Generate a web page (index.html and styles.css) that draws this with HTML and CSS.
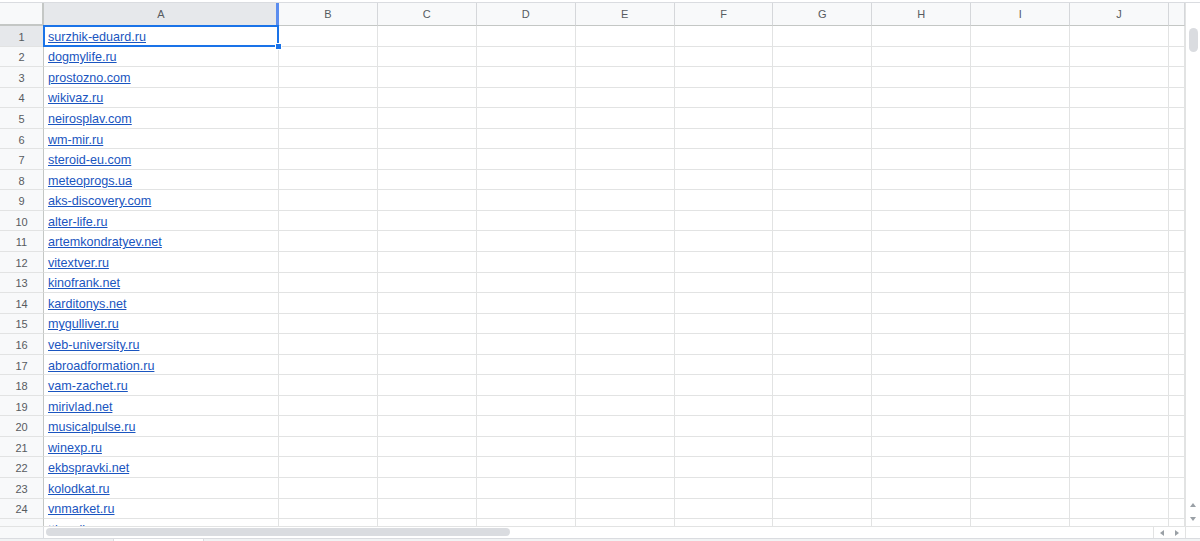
FILE: index.html
```html
<!DOCTYPE html>
<html lang="ru">
<head>
    <meta charset="UTF-8">
    <title>Таблица</title>
    <link rel="stylesheet" href="styles.css">
</head>
<body>
    <div class="top-edge"></div>

    <div class="main">
        <div class="grid">
            <div class="row head">
                <div class="corner"></div>
                <div class="col-a">A</div>
                <div>B</div><div>C</div><div>D</div><div>E</div><div>F</div>
                <div>G</div><div>H</div><div>I</div><div>J</div><div></div>
            </div>

            <div class="row"><div class="rn on">1</div><div class="cell sel"><a href="#">surzhik-eduard.ru</a><span class="handle"></span></div><div></div><div></div><div></div><div></div><div></div><div></div><div></div><div></div><div></div><div></div></div>
            <div class="row"><div class="rn">2</div><div class="cell"><a href="#">dogmylife.ru</a></div><div></div><div></div><div></div><div></div><div></div><div></div><div></div><div></div><div></div><div></div></div>
            <div class="row"><div class="rn">3</div><div class="cell"><a href="#">prostozno.com</a></div><div></div><div></div><div></div><div></div><div></div><div></div><div></div><div></div><div></div><div></div></div>
            <div class="row"><div class="rn">4</div><div class="cell"><a href="#">wikivaz.ru</a></div><div></div><div></div><div></div><div></div><div></div><div></div><div></div><div></div><div></div><div></div></div>
            <div class="row"><div class="rn">5</div><div class="cell"><a href="#">neirosplav.com</a></div><div></div><div></div><div></div><div></div><div></div><div></div><div></div><div></div><div></div><div></div></div>
            <div class="row"><div class="rn">6</div><div class="cell"><a href="#">wm-mir.ru</a></div><div></div><div></div><div></div><div></div><div></div><div></div><div></div><div></div><div></div><div></div></div>
            <div class="row"><div class="rn">7</div><div class="cell"><a href="#">steroid-eu.com</a></div><div></div><div></div><div></div><div></div><div></div><div></div><div></div><div></div><div></div><div></div></div>
            <div class="row"><div class="rn">8</div><div class="cell"><a href="#">meteoprogs.ua</a></div><div></div><div></div><div></div><div></div><div></div><div></div><div></div><div></div><div></div><div></div></div>
            <div class="row"><div class="rn">9</div><div class="cell"><a href="#">aks-discovery.com</a></div><div></div><div></div><div></div><div></div><div></div><div></div><div></div><div></div><div></div><div></div></div>
            <div class="row"><div class="rn">10</div><div class="cell"><a href="#">alter-life.ru</a></div><div></div><div></div><div></div><div></div><div></div><div></div><div></div><div></div><div></div><div></div></div>
            <div class="row"><div class="rn">11</div><div class="cell"><a href="#">artemkondratyev.net</a></div><div></div><div></div><div></div><div></div><div></div><div></div><div></div><div></div><div></div><div></div></div>
            <div class="row"><div class="rn">12</div><div class="cell"><a href="#">vitextver.ru</a></div><div></div><div></div><div></div><div></div><div></div><div></div><div></div><div></div><div></div><div></div></div>
            <div class="row"><div class="rn">13</div><div class="cell"><a href="#">kinofrank.net</a></div><div></div><div></div><div></div><div></div><div></div><div></div><div></div><div></div><div></div><div></div></div>
            <div class="row"><div class="rn">14</div><div class="cell"><a href="#">karditonys.net</a></div><div></div><div></div><div></div><div></div><div></div><div></div><div></div><div></div><div></div><div></div></div>
            <div class="row"><div class="rn">15</div><div class="cell"><a href="#">mygulliver.ru</a></div><div></div><div></div><div></div><div></div><div></div><div></div><div></div><div></div><div></div><div></div></div>
            <div class="row"><div class="rn">16</div><div class="cell"><a href="#">veb-university.ru</a></div><div></div><div></div><div></div><div></div><div></div><div></div><div></div><div></div><div></div><div></div></div>
            <div class="row"><div class="rn">17</div><div class="cell"><a href="#">abroadformation.ru</a></div><div></div><div></div><div></div><div></div><div></div><div></div><div></div><div></div><div></div><div></div></div>
            <div class="row"><div class="rn">18</div><div class="cell"><a href="#">vam-zachet.ru</a></div><div></div><div></div><div></div><div></div><div></div><div></div><div></div><div></div><div></div><div></div></div>
            <div class="row"><div class="rn">19</div><div class="cell"><a href="#">mirivlad.net</a></div><div></div><div></div><div></div><div></div><div></div><div></div><div></div><div></div><div></div><div></div></div>
            <div class="row"><div class="rn">20</div><div class="cell"><a href="#">musicalpulse.ru</a></div><div></div><div></div><div></div><div></div><div></div><div></div><div></div><div></div><div></div><div></div></div>
            <div class="row"><div class="rn">21</div><div class="cell"><a href="#">winexp.ru</a></div><div></div><div></div><div></div><div></div><div></div><div></div><div></div><div></div><div></div><div></div></div>
            <div class="row"><div class="rn">22</div><div class="cell"><a href="#">ekbspravki.net</a></div><div></div><div></div><div></div><div></div><div></div><div></div><div></div><div></div><div></div><div></div></div>
            <div class="row"><div class="rn">23</div><div class="cell"><a href="#">kolodkat.ru</a></div><div></div><div></div><div></div><div></div><div></div><div></div><div></div><div></div><div></div><div></div></div>
            <div class="row"><div class="rn">24</div><div class="cell"><a href="#">vnmarket.ru</a></div><div></div><div></div><div></div><div></div><div></div><div></div><div></div><div></div><div></div><div></div></div>
            <div class="row"><div class="rn">25</div><div class="cell"><a href="#">ttbmall.ru</a></div><div></div><div></div><div></div><div></div><div></div><div></div><div></div><div></div><div></div><div></div></div>
        </div>

        <div class="vscroll">
            <div class="thumb"></div>
            <div class="arrows">
                <span class="tri up"></span>
                <span class="tri down"></span>
            </div>
        </div>
    </div>

    <div class="hscroll">
        <div class="hs-corner"></div>
        <div class="hs-track"><div class="hs-thumb"></div></div>
        <div class="hs-arrows">
            <span class="tri left"></span>
            <span class="tri right"></span>
        </div>
        <div class="hs-end"></div>
    </div>

    <div class="tabs">
        <div class="tab-pad"></div>
        <div class="tab"></div>
    </div>
</body>
</html>
```

FILE: styles.css
```css
body {
    margin: 0;
    width: 1200px;
    height: 541px;
    overflow: hidden;
    background: #ffffff;
    font-family: 'Liberation Sans', Arial, sans-serif;
}

.top-edge {
    height: 2px;
    border-bottom: 1px solid #dadce0;
}

.main {
    display: flex;
    height: 523px;
}

.grid {
    width: 1185px;
    overflow: hidden;
}

.row {
    display: grid;
    grid-template-columns: 44px 235px repeat(9, 98.9px) 16px;
    height: 20.55px;
}

.row > div {
    box-sizing: border-box;
    border-right: 1px solid #e2e3e3;
    border-bottom: 1px solid #e2e3e3;
    min-width: 0;
}

/* шапка со столбцами */
.row.head {
    height: 23px;
    background: #f8f9fa;
}

.row.head > div {
    display: flex;
    align-items: center;
    justify-content: center;
    font-size: 11px;
    color: #575b5f;
    border-right-color: #d5d7da;
    border-bottom-color: #c4c7c5;
}

.row.head .corner {
    border-right: 2px solid #c4c7c5;
    border-bottom: 2px solid #c4c7c5;
}

.row.head .col-a {
    position: relative;
    background: #e6e8eb;
}

.row.head .col-a::after {
    content: '';
    position: absolute;
    top: 0;
    bottom: 0;
    right: -1px;
    width: 3px;
    background: #5b8def;
}

/* номера строк */
.rn {
    display: flex;
    align-items: center;
    justify-content: center;
    padding-top: 2px;
    background: #f8f9fa;
    color: #575b5f;
    font-size: 11px;
}

.row > .rn {
    border-right-color: #c4c7c5;
    border-bottom-color: #e2e3e3;
}

.rn.on {
    background: #e6e8eb;
}

.cell {
    display: flex;
    align-items: center;
    padding: 2px 4px 0;
    overflow: hidden;
    white-space: nowrap;
}

.cell a {
    font-size: 12.6px;
    color: #1a55c0;
    text-decoration: underline;
}

.sel {
    position: relative;
    overflow: visible !important;
}

.sel::before {
    content: '';
    position: absolute;
    left: -1px;
    top: -1px;
    right: -1px;
    bottom: -1px;
    border: 2px solid #1a73e8;
}

.handle {
    position: absolute;
    right: -4px;
    bottom: -4px;
    width: 5px;
    height: 5px;
    background: #1a73e8;
    border: 1px solid #ffffff;
    z-index: 2;
}

/* вертикальная прокрутка */
.vscroll {
    width: 15px;
    box-sizing: border-box;
    border-left: 1px solid #e2e3e3;
    display: flex;
    flex-direction: column;
    align-items: center;
}

.thumb {
    margin-top: 25px;
    width: 9px;
    height: 24px;
    border-radius: 5px;
    background: #dadce0;
}

.arrows {
    margin-top: auto;
    display: flex;
    flex-direction: column;
    align-items: center;
    gap: 10px;
    padding-bottom: 5px;
}

.tri {
    width: 0;
    height: 0;
    display: block;
}

.tri.up {
    border-left: 3px solid transparent;
    border-right: 3px solid transparent;
    border-bottom: 4px solid #9aa0a6;
}

.tri.down {
    border-left: 3px solid transparent;
    border-right: 3px solid transparent;
    border-top: 4px solid #9aa0a6;
}

.tri.left {
    border-top: 3px solid transparent;
    border-bottom: 3px solid transparent;
    border-right: 4px solid #9aa0a6;
}

.tri.right {
    border-top: 3px solid transparent;
    border-bottom: 3px solid transparent;
    border-left: 4px solid #9aa0a6;
}

/* горизонтальная прокрутка */
.hscroll {
    display: flex;
    height: 11px;
    border-top: 1px solid #e2e3e3;
}

.hs-corner {
    width: 44px;
    box-sizing: border-box;
    background: #f8f9fa;
    border-right: 1px solid #dadce0;
}

.hs-track {
    flex: 1;
    padding: 1px 0 0 2px;
}

.hs-thumb {
    width: 464px;
    height: 8px;
    border-radius: 4px;
    background: #dadce0;
}

.hs-arrows {
    width: 32px;
    box-sizing: border-box;
    border-left: 1px solid #e2e3e3;
    display: flex;
    align-items: center;
    justify-content: space-around;
}

.hs-end {
    width: 15px;
    box-sizing: border-box;
    border-left: 1px solid #e2e3e3;
}

.tabs {
    display: flex;
    height: 3px;
    background: #f1f3f4;
    border-top: 1px solid #dadce0;
}

.tab-pad {
    width: 113px;
}

.tab {
    width: 89px;
    background: #ffffff;
    border-left: 1px solid #dadce0;
    border-right: 1px solid #dadce0;
}
```
